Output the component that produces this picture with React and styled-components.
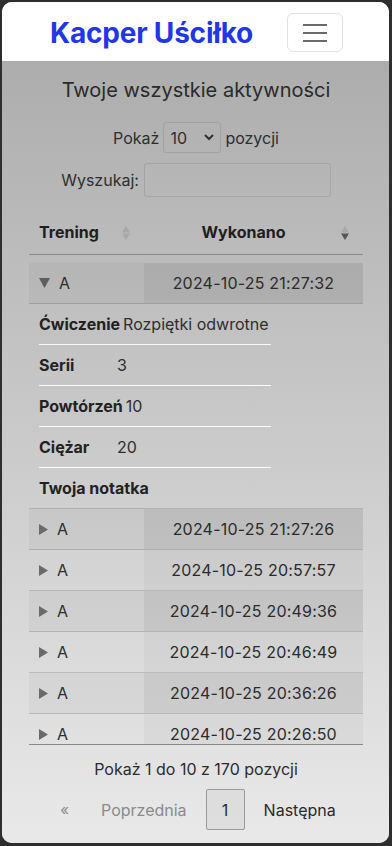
import React from "react";
import styled, { createGlobalStyle } from "styled-components";

const GlobalStyle = createGlobalStyle`
  html, body {
    margin: 0;
    padding: 0;
    background: #2e2e2e;
  }
  body {
    font-family: Inter, "Noto Sans", sans-serif;
    color: #2b2b2b;
  }
  * { box-sizing: border-box; }
`;

// only the rows visible inside the scroll area
const rows = [
  "2024-10-25 21:27:26",
  "2024-10-25 20:57:57",
  "2024-10-25 20:49:36",
  "2024-10-25 20:46:49",
  "2024-10-25 20:36:26",
  "2024-10-25 20:26:50",
];

const details = [
  ["Ćwiczenie", "Rozpiętki odwrotne"],
  ["Serii", "3"],
  ["Powtórzeń", "10"],
  ["Ciężar", "20"],
  ["Twoja notatka", ""],
];

function SortIcon({ active }) {
  return (
    <SortWrap viewBox="0 0 8 14" width="8" height="14">
      <path d="M4 0 L8 6.5 L0 6.5 Z" fill="#a8a8a8" />
      <path d="M0 7.5 L8 7.5 L4 14 Z" fill={active ? "#555" : "#a8a8a8"} />
    </SortWrap>
  );
}

function Caret({ open }) {
  return open ? (
    <svg width="11" height="10" viewBox="0 0 11 10">
      <path d="M0 0 L11 0 L5.5 10 Z" fill="#5e5e5e" />
    </svg>
  ) : (
    <svg width="9" height="11" viewBox="0 0 9 11">
      <path d="M0 0 L9 5.5 L0 11 Z" fill="#6a6a6a" />
    </svg>
  );
}

function App() {
  return (
    <>
      <GlobalStyle />
      <Frame>
        <Navbar>
          <Brand>Kacper Uściłko</Brand>
          <Toggler aria-label="menu">
            <Bar />
            <Bar />
            <Bar />
          </Toggler>
        </Navbar>
        <Main>
          <Title>Twoje wszystkie aktywności</Title>
          <LengthRow>
            Pokaż
            <SelectWrap>
              <Select defaultValue="10">
                <option>10</option>
                <option>25</option>
                <option>50</option>
              </Select>
              <Chevron viewBox="0 0 10 7" width="10" height="7">
                <path d="M1 1 L5 5 L9 1" stroke="#333" strokeWidth="2" fill="none" />
              </Chevron>
            </SelectWrap>
            pozycji
          </LengthRow>
          <SearchRow>
            Wyszukaj:
            <SearchInput type="search" />
          </SearchRow>

          <HeadRow>
            <HeadCell>
              Trening
              <SortIcon />
            </HeadCell>
            <HeadCell $center>
              Wykonano
              <SortIcon active />
            </HeadCell>
          </HeadRow>

          <ScrollBody>
            <Row $odd>
              <NameCell>
                <Caret open />A
              </NameCell>
              <DateCell $odd>2024-10-25 21:27:32</DateCell>
            </Row>
            <ChildRow>
              <DetailList>
                {details.map(([label, value], i) => (
                  <DetailItem key={label} $last={i === details.length - 1}>
                    <DetailLabel>{label}</DetailLabel>
                    {value}
                  </DetailItem>
                ))}
              </DetailList>
            </ChildRow>
            {rows.map((d, i) => (
              <Row key={d} $odd={i % 2 === 0}>
                <NameCell>
                  <Caret />A
                </NameCell>
                <DateCell $odd={i % 2 === 0}>{d}</DateCell>
              </Row>
            ))}
          </ScrollBody>

          <Info>Pokaż 1 do 10 z 170 pozycji</Info>
          <Pagination>
            <PageLink $muted $first>«</PageLink>
            <PageLink $muted>Poprzednia</PageLink>
            <PageButton>1</PageButton>
            <PageLink>Następna</PageLink>
          </Pagination>
        </Main>
      </Frame>
    </>
  );
}

const Frame = styled.div`
  margin: 2px 3px 3px 2px;
  height: 841px;
  border-radius: 10px;
  overflow: hidden;
  display: flex;
  flex-direction: column;
  background: #fff;
`;

const Navbar = styled.header`
  height: 59px;
  flex-shrink: 0;
  background: #fff;
  display: flex;
  align-items: center;
  justify-content: space-between;
  padding: 0 46px 0 48px;
`;

const Brand = styled.a`
  font-size: 28px;
  font-weight: 700;
  color: #2137e6;
  letter-spacing: -0.2px;
  margin-top: 2px;
`;

const Toggler = styled.button`
  width: 56px;
  height: 39px;
  margin-top: 2px;
  border: 1px solid #e2e2e2;
  border-radius: 6px;
  background: #fff;
  display: flex;
  flex-direction: column;
  align-items: center;
  justify-content: center;
  gap: 6px;
  padding: 0;
`;

const Bar = styled.span`
  display: block;
  width: 24px;
  height: 2px;
  background: #6a6a6a;
`;

const Main = styled.main`
  flex: 1;
  background: linear-gradient(180deg, #adadad 0%, #e9e9e9 100%);
  padding: 0 26px 0 27px;
  font-size: 16px;
`;

const Title = styled.h1`
  margin: 17px 0 0;
  text-align: center;
  font-size: 20px;
  line-height: 24px;
  font-weight: 400;
  color: #2a2a2a;
`;

const LengthRow = styled.div`
  margin-top: 20px;
  display: flex;
  justify-content: center;
  align-items: center;
  gap: 4px;
  color: #2e2e2e;
`;

const SelectWrap = styled.span`
  position: relative;
  display: inline-block;
`;

const Select = styled.select`
  appearance: none;
  width: 58px;
  height: 31px;
  padding: 0 0 0 6px;
  font: inherit;
  color: #2e2e2e;
  background: transparent;
  border: 1px solid rgba(0, 0, 0, 0.09);
  border-radius: 3px;
`;

const Chevron = styled.svg`
  position: absolute;
  right: 7px;
  top: 12px;
  pointer-events: none;
`;

const SearchRow = styled.label`
  margin-top: 10px;
  display: flex;
  justify-content: center;
  align-items: center;
  gap: 5px;
  color: #2e2e2e;
`;

const SearchInput = styled.input`
  width: 187px;
  height: 34px;
  background: transparent;
  border: 1px solid rgba(0, 0, 0, 0.09);
  border-radius: 3px;
`;

const HeadRow = styled.div`
  margin-top: 13px;
  height: 45px;
  display: grid;
  grid-template-columns: 115px 1fr;
  border-bottom: 1px solid #888;
`;

const HeadCell = styled.div`
  position: relative;
  display: flex;
  align-items: center;
  justify-content: ${(p) => (p.$center ? "center" : "flex-start")};
  padding: 0 ${(p) => (p.$center ? "30px" : "10px")} 0 10px;
  font-weight: 700;
  color: #1e1e1e;
`;

const SortWrap = styled.svg`
  position: absolute;
  right: 14px;
  top: 16px;
`;

const ScrollBody = styled.div`
  margin-top: 8px;
  height: 482px;
  overflow-y: auto;
  scrollbar-width: none;
  border-bottom: 1px solid #888;
`;

const Row = styled.div`
  display: grid;
  grid-template-columns: 115px 1fr;
  height: 41px;
  border-bottom: 1px solid rgba(0, 0, 0, 0.14);
  background: ${(p) => (p.$odd ? "rgba(0, 0, 0, 0.035)" : "transparent")};
`;

const NameCell = styled.div`
  display: flex;
  align-items: center;
  gap: 9px;
  padding-left: 10px;
  color: #2e2e2e;
`;

const DateCell = styled.div`
  display: flex;
  align-items: center;
  justify-content: center;
  color: #2b2b2b;
  letter-spacing: 0.2px;
  background: ${(p) => (p.$odd ? "rgba(0, 0, 0, 0.05)" : "rgba(0, 0, 0, 0.03)")};
`;

const ChildRow = styled.div`
  border-bottom: 1px solid rgba(0, 0, 0, 0.14);
`;

const DetailList = styled.ul`
  list-style: none;
  margin: 0;
  padding: 0 0 0 10px;
  width: 242px;
`;

const DetailItem = styled.li`
  height: ${(p) => (p.$last ? "40px" : "41px")};
  display: flex;
  align-items: center;
  border-bottom: ${(p) => (p.$last ? "none" : "1px solid rgba(255, 255, 255, 0.9)")};
  color: #2e2e2e;
`;

const DetailLabel = styled.span`
  min-width: 75px;
  margin-right: 3px;
  font-weight: 700;
  color: #222;
  white-space: nowrap;
`;

const Info = styled.div`
  margin-top: 12px;
  text-align: center;
  line-height: 24px;
  color: #2b2b2b;
`;

const Pagination = styled.nav`
  margin-top: 8px;
  display: flex;
  justify-content: center;
  align-items: center;
  gap: 19px;
  padding-left: 4px;
`;

const PageLink = styled.span`
  color: ${(p) => (p.$muted ? "#8a8a8a" : "#2b2b2b")};
  margin-right: ${(p) => (p.$first ? "13px" : "0")};
  font-size: ${(p) => (p.$first ? "15px" : "16px")};
`;

const PageButton = styled.span`
  width: 39px;
  height: 41px;
  display: flex;
  align-items: center;
  justify-content: center;
  border: 1px solid #9a9a9a;
  border-radius: 2px;
  background: rgba(0, 0, 0, 0.04);
  color: #2b2b2b;
`;

export default App;
